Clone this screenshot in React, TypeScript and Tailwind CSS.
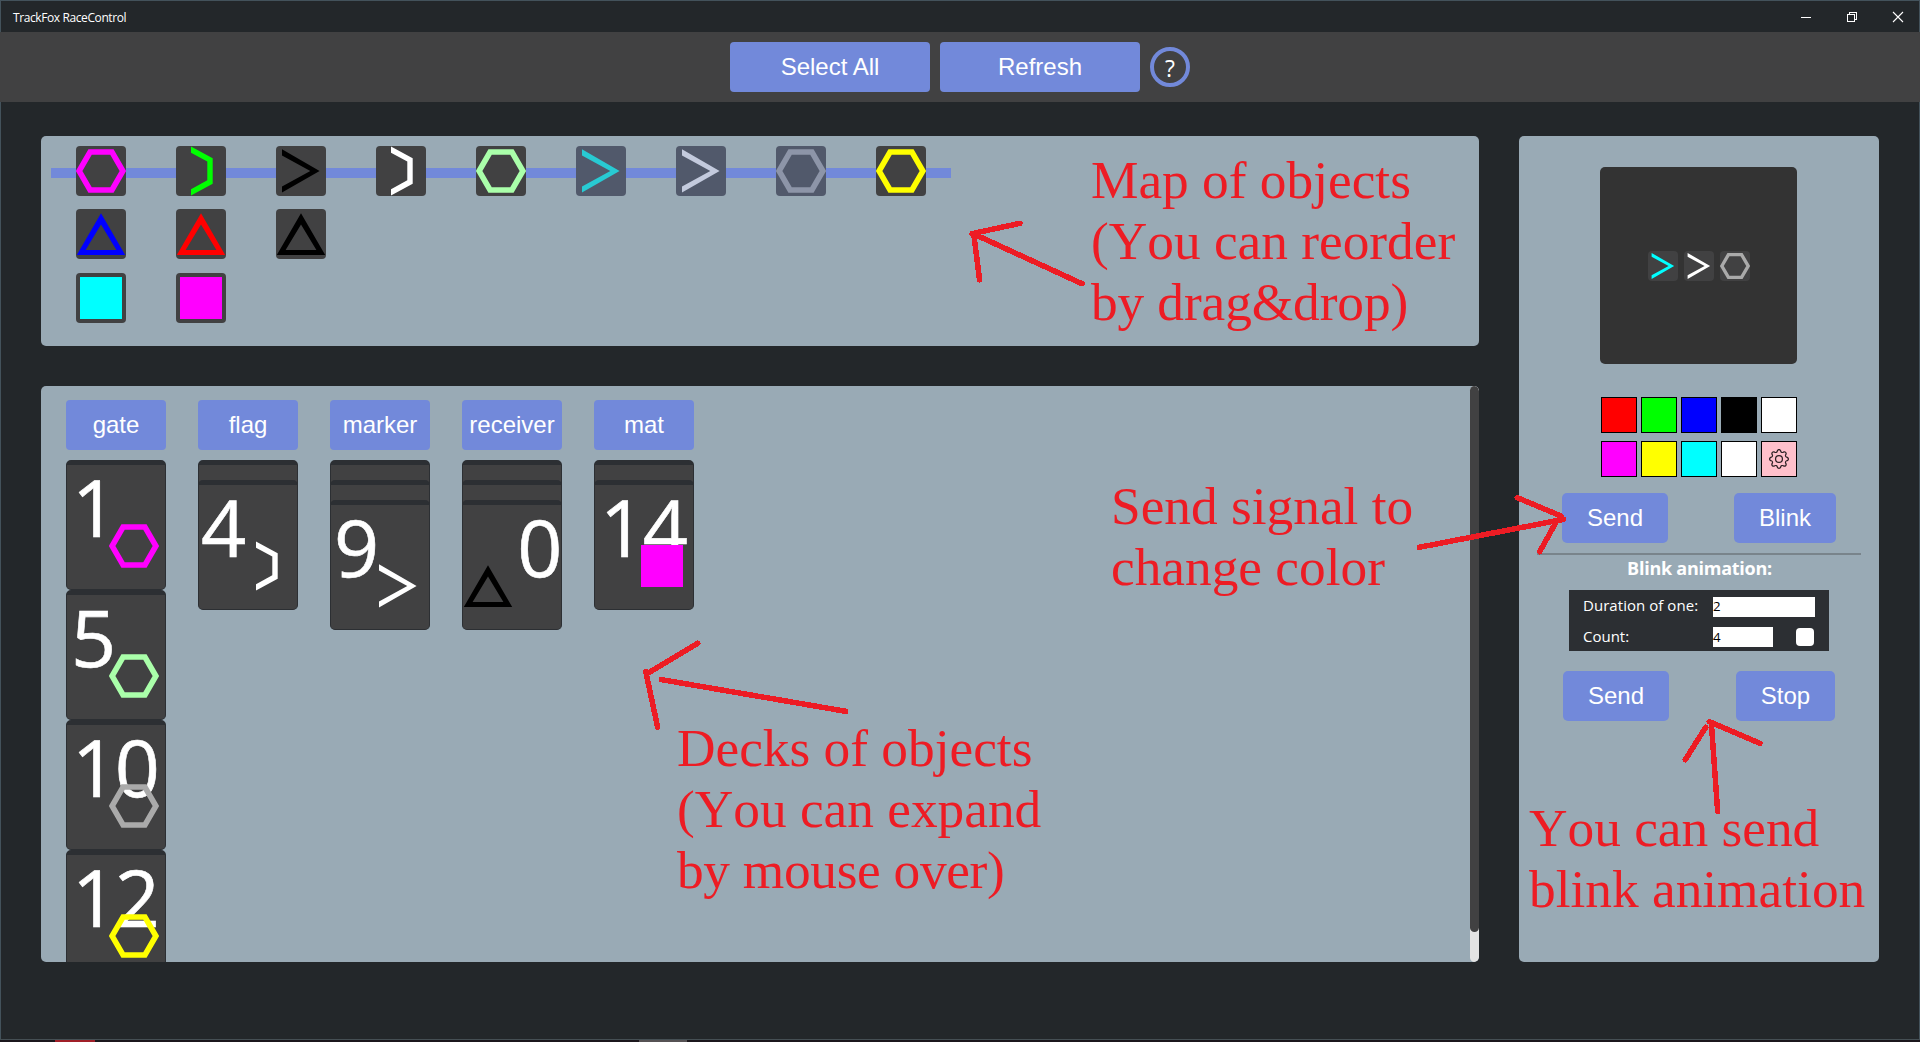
import { BsGear } from "react-icons/bs";

type ShapeKind = "hexagon" | "flag" | "arrow" | "triangle" | "square";

function Shape({ kind, color, className }: { kind: ShapeKind; color: string; className: string }) {
  return (
    <svg viewBox="0 0 50 50" className={className} aria-hidden="true">
      {kind === "hexagon" && (
        <polygon
          points="3.1,25 14.05,6.05 35.95,6.05 46.9,25 35.95,43.95 14.05,43.95"
          fill="none"
          stroke={color}
          strokeWidth="5.6"
        />
      )}
      {kind === "flag" && (
        <polygon
          points="15,0.5 36.7,12.2 36.7,37.8 15,49.6 15,43.2 31.3,34.3 31.3,15.6 15,6.8"
          fill={color}
        />
      )}
      {kind === "arrow" && (
        <polygon points="6,3.3 43.6,25 6,46.6 6,40.6 34.3,25 6,9.4" fill={color} />
      )}
      {kind === "triangle" && (
        <path
          d="M25 4.2 L49.2 46 H0.8 Z M25 15.6 L9.6 41 H40.4 Z"
          fillRule="evenodd"
          fill={color}
        />
      )}
      {kind === "square" && <rect x="4" y="4" width="42" height="42" fill={color} />}
    </svg>
  );
}

interface Item {
  kind: ShapeKind;
  color: string;
  selected?: boolean;
}

const trackRow: Item[] = [
  { kind: "hexagon", color: "#ff00ff" },
  { kind: "flag", color: "#00ff00" },
  { kind: "arrow", color: "#000000" },
  { kind: "flag", color: "#ffffff" },
  { kind: "hexagon", color: "#aaffaa" },
  { kind: "arrow", color: "#28cad3", selected: true },
  { kind: "arrow", color: "#c3cadd", selected: true },
  { kind: "hexagon", color: "#8d95a8", selected: true },
  { kind: "hexagon", color: "#ffff00" },
];

const receiverRow: Item[] = [
  { kind: "triangle", color: "#0000ff" },
  { kind: "triangle", color: "#ff0000" },
  { kind: "triangle", color: "#000000" },
];

const matRow: Item[] = [
  { kind: "square", color: "#00ffff" },
  { kind: "square", color: "#ff00ff" },
];

function TileRow({ items }: { items: Item[] }) {
  return (
    <div className="flex gap-[50px]">
      {items.map((item, i) => (
        <div
          key={i}
          className={
            item.selected
              ? "size-[50px] rounded-[4px] bg-[#51596b]"
              : "size-[50px] rounded-[4px] bg-[#414142]"
          }
        >
          <Shape kind={item.kind} color={item.color} className="size-full" />
        </div>
      ))}
    </div>
  );
}

interface CardData {
  label: string;
  kind: ShapeKind;
  color: string;
  inset: string;
  reversed?: boolean;
}

interface DeckData {
  name: string;
  hidden: number;
  cards: CardData[];
}

const decks: DeckData[] = [
  {
    name: "gate",
    hidden: 0,
    cards: [
      { label: "1", kind: "hexagon", color: "#ff00ff", inset: "pl-[5px]" },
      { label: "5", kind: "hexagon", color: "#aaffaa", inset: "pl-[4px]" },
      { label: "10", kind: "hexagon", color: "#aaaaaa", inset: "pl-[5px]" },
      { label: "12", kind: "hexagon", color: "#ffff00", inset: "pl-[5px]" },
    ],
  },
  {
    name: "flag",
    hidden: 1,
    cards: [{ label: "4", kind: "flag", color: "#ffffff", inset: "pl-[2px]" }],
  },
  {
    name: "marker",
    hidden: 2,
    cards: [{ label: "9", kind: "arrow", color: "#ffffff", inset: "pl-[3px]" }],
  },
  {
    name: "receiver",
    hidden: 2,
    cards: [
      { label: "0", kind: "triangle", color: "#000000", inset: "pr-px text-right", reversed: true },
    ],
  },
  {
    name: "mat",
    hidden: 1,
    cards: [{ label: "14", kind: "square", color: "#ff00ff", inset: "pl-[5px]" }],
  },
];

const cardFrame =
  "relative h-[130px] w-[100px] shrink-0 rounded-[5px] border border-t-[5px] border-[#2c2f33] bg-[#414142]";

function Card({ card }: { card: CardData }) {
  return (
    <div className={cardFrame}>
      <div
        className={`font-[Open_Sans,sans-serif] text-[79px] leading-[83px] tracking-[-2.4px] text-white [-webkit-text-stroke:0.6px_white] ${card.inset}`}
      >
        {card.label}
      </div>
      <Shape
        kind={card.kind}
        color={card.color}
        className={
          card.reversed
            ? "absolute top-[56px] left-0 size-[50px]"
            : "absolute top-[56px] left-[42px] size-[50px]"
        }
      />
    </div>
  );
}

function Deck({ deck }: { deck: DeckData }) {
  return (
    <div className="flex w-[100px] flex-col">
      <button className="mb-[10px] h-[50px] w-full shrink-0 rounded-[4px] bg-[#7289da] text-[24px] text-white">
        {deck.name}
      </button>
      {Array.from({ length: deck.hidden }, (_, i) => (
        <div key={i} className="h-5 shrink-0">
          <div className={cardFrame} />
        </div>
      ))}
      {deck.cards.map((card) => (
        <Card key={card.label} card={card} />
      ))}
    </div>
  );
}

const swatches = [
  "bg-[#ff0000]",
  "bg-[#00ff00]",
  "bg-[#0000ff]",
  "bg-black",
  "bg-white",
  "bg-[#ff00ff]",
  "bg-[#ffff00]",
  "bg-[#00ffff]",
  "bg-white",
];

const actionButton = "h-[50px] rounded-[5px] bg-[#7289da] text-[24px] text-white";

function ControlPanel() {
  return (
    <aside className="flex h-[826px] w-[360px] flex-col items-center rounded-[5px] bg-[#99aab5] pt-[31px]">
      <div className="mr-px flex size-[197px] items-center justify-center gap-[6px] rounded-[5px] bg-[#333333] pt-px pl-px">
        <div className="size-[30px] rounded-[4px] bg-[#414142]">
          <Shape kind="arrow" color="#00ffff" className="size-full" />
        </div>
        <div className="size-[30px] rounded-[4px] bg-[#414142]">
          <Shape kind="arrow" color="#ffffff" className="size-full" />
        </div>
        <div className="size-[30px] rounded-[4px] bg-[#414142]">
          <Shape kind="hexagon" color="#aaaaaa" className="size-full" />
        </div>
      </div>

      <div className="mt-[33px] grid grid-cols-5 gap-x-1 gap-y-2">
        {swatches.map((color, i) => (
          <div key={i} className={`size-9 border border-black ${color}`} />
        ))}
        <div className="flex size-9 items-center justify-center border border-black bg-[#ffc0cb]">
          <BsGear className="size-5 text-[#2c2024]" />
        </div>
      </div>

      <div className="mt-4 flex w-[274px] justify-between">
        <button className={`w-[106px] ${actionButton}`}>Send</button>
        <button className={`w-[102px] ${actionButton}`}>Blink</button>
      </div>
      <div className="mt-[10px] h-[2px] w-[324px] bg-[#79848b]" />
      <h2 className="mt-[2px] h-[33px] pl-px font-[Open_Sans,sans-serif] text-[18px] leading-[22px] font-bold tracking-[-0.25px] text-white">
        Blink animation:
      </h2>

      <div className="grid h-[61px] w-[260px] grid-cols-[130px_102px] grid-rows-[20px_20px] gap-y-[10px] bg-[#2c2f33] pt-[7px] pl-[14px] font-[Open_Sans,sans-serif] text-[15px] text-white">
        <label className="leading-[16px] tracking-[0.05px] whitespace-nowrap">Duration of one:</label>
        <div className="h-5 bg-white text-[13.3px] leading-[19px] text-black">2</div>
        <label className="leading-[18px]">Count:</label>
        <div className="flex justify-between">
          <div className="h-5 w-[60px] bg-white text-[13.3px] leading-[20px] text-black">4</div>
          <div className="mt-px mr-px size-[18px] rounded-[4px] bg-white" />
        </div>
      </div>

      <div className="mt-5 flex w-[272px] justify-between">
        <button className={`w-[106px] ${actionButton}`}>Send</button>
        <button className={`w-[99px] ${actionButton}`}>Stop</button>
      </div>
    </aside>
  );
}

const noteText =
  "absolute font-[Liberation_Serif,serif] text-[53.33px] leading-[61px] whitespace-pre text-[#ed1c24] [font-kerning:none]";

function Annotations() {
  return (
    <div className="pointer-events-none absolute inset-0">
      <svg
        viewBox="0 0 1920 1042"
        className="absolute inset-0 h-[1042px] w-[1920px]"
        fill="none"
        stroke="#ed1c24"
        strokeWidth="5.5"
        strokeLinecap="round"
        strokeLinejoin="round"
        shapeRendering="crispEdges"
      >
        <path d="M972 233.7 L1020 223.3 M974 236 L979.6 280 M976 235 L1082 283.7" />
        <path d="M697.7 643.3 L647.5 673.5 M645.7 671.5 L657.7 727.3 M661.3 679.6 L845.7 711.3" />
        <path d="M1419.3 547.3 L1563.7 519.3 M1517.3 497.7 L1561 516 M1539.7 551.7 L1556.7 521" />
        <path d="M1717.7 811.7 L1711.3 723 M1709.3 721.7 L1760 743.3 M1685.3 759.7 L1705.7 727.3" />
      </svg>
      <p className={`top-[150px] left-[1091px] ${noteText}`}>
        {"Map of objects\n(You can reorder\n"}
        <span className="tracking-[-0.1px]">by drag&amp;drop)</span>
      </p>
      <p className={`top-[476px] left-[1111px] ${noteText}`}>{"Send signal to\nchange color"}</p>
      <p className={`top-[718px] left-[677px] ${noteText}`}>
        {"Decks of objects\n(You can expand\n"}
        <span className="tracking-[-0.3px]">by mouse over)</span>
      </p>
      <p className={`top-[798px] left-[1529px] ${noteText}`}>{"You can send\nblink animation"}</p>
    </div>
  );
}

function WindowControls() {
  return (
    <div className="flex text-white">
      <svg viewBox="0 0 46 31" className="h-[31px] w-[46px]" shapeRendering="crispEdges">
        <rect x="20" y="16" width="10" height="1" fill="currentColor" />
      </svg>
      <svg
        viewBox="0 0 46 31"
        className="h-[31px] w-[46px]"
        fill="none"
        stroke="currentColor"
        shapeRendering="crispEdges"
      >
        <rect x="20.5" y="13.5" width="7" height="7" />
        <path d="M22.5 13.5 V11.5 H29.5 V18.5 H27.5" />
      </svg>
      <svg
        viewBox="0 0 46 31"
        className="h-[31px] w-[46px]"
        fill="none"
        stroke="currentColor"
        strokeWidth="1.1"
      >
        <path d="M20 11 L30 21 M30 11 L20 21" />
      </svg>
    </div>
  );
}

export default function App() {
  return (
    <div className="relative flex h-[1042px] w-[1920px] flex-col overflow-hidden bg-[#23272a] font-[Liberation_Sans,Arial,sans-serif]">
      <div className="flex h-8 shrink-0 justify-between border border-b-0 border-[#43525b] pl-3">
        <span className="font-[Open_Sans,sans-serif] text-[12px] leading-[33px] tracking-[-0.4px] text-white">
          TrackFox RaceControl
        </span>
        <WindowControls />
      </div>

      <header className="flex h-[70px] shrink-0 items-center justify-center gap-[10px] bg-[#414142]">
        <button className="h-[50px] w-[200px] rounded-[4px] bg-[#7289da] text-[24px] text-white">
          Select All
        </button>
        <button className="h-[50px] w-[200px] rounded-[4px] bg-[#7289da] text-[24px] text-white">
          Refresh
        </button>
        <button className="size-10 rounded-full border-4 border-[#7289da] font-[Open_Sans,sans-serif] text-[23px] leading-[34px] font-medium text-white">
          ?
        </button>
      </header>

      <main className="flex min-h-0 flex-1 gap-10 border-x border-[#43525b] pt-[34px] pl-10">
        <div className="flex w-[1438px] flex-col gap-10">
          <section className="h-[210px] rounded-[5px] bg-[#99aab5] pt-[10px] pl-[10px]">
            <div className="relative flex h-[50px] w-[900px] items-center pl-[25px]">
              <div className="absolute top-[22px] left-0 h-[10px] w-full bg-[#7289da]" />
              <div className="relative">
                <TileRow items={trackRow} />
              </div>
            </div>
            <div className="mt-[13px] pl-[25px]">
              <TileRow items={receiverRow} />
            </div>
            <div className="mt-[14px] pl-[25px]">
              <TileRow items={matRow} />
            </div>
          </section>

          <section className="flex h-[576px] justify-between overflow-hidden rounded-[5px] bg-[#99aab5]">
            <div className="flex gap-8 pt-[14px] pl-[25px]">
              {decks.map((deck) => (
                <Deck key={deck.name} deck={deck} />
              ))}
            </div>
            <div className="h-full w-[9px] rounded-[5px] bg-[#e3e3e3]">
              <div className="h-[546px] rounded-[5px] bg-[#414142]" />
            </div>
          </section>
        </div>
        <ControlPanel />
      </main>

      <footer className="flex h-[3px] shrink-0 border-t border-[#454f54] bg-[#1b171c]">
        <div className="ml-[55px] h-[2px] w-10 bg-[#a01f28]" />
        <div className="ml-[544px] h-[2px] w-12 bg-[#565254]" />
      </footer>

      <Annotations />
    </div>
  );
}
